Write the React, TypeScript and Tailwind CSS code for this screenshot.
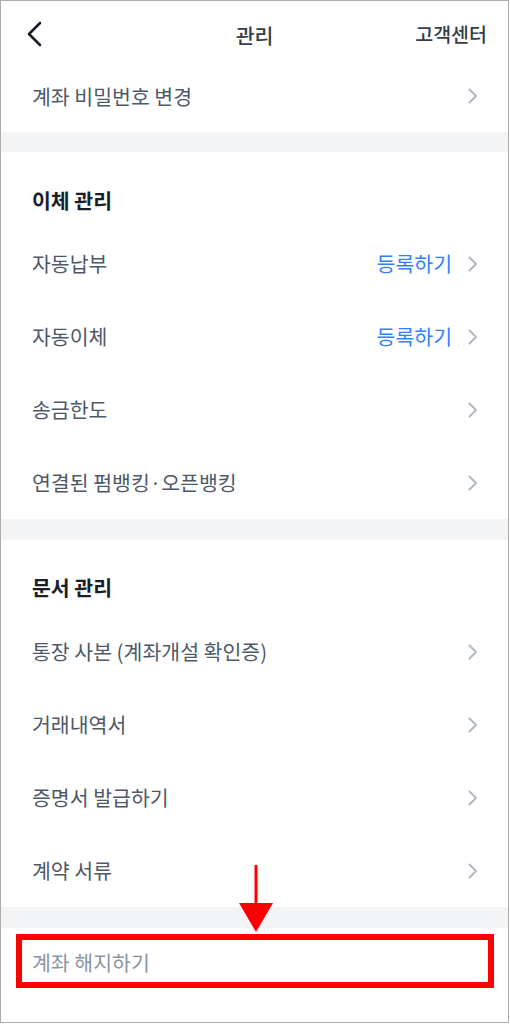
import React from "react";

const font = { fontFamily: '"Noto Sans CJK KR", "Noto Sans", sans-serif' };

function Chevron() {
  return (
    <svg width="10" height="16" viewBox="0 0 10 16" fill="none" className="shrink-0">
      <path d="M1.5 1.5L8 8L1.5 14.5" stroke="#b0b8c1" strokeWidth="2" strokeLinecap="round" strokeLinejoin="round" />
    </svg>
  );
}

interface RowProps {
  label: string;
  action?: string;
}

function Row({ label, action }: RowProps) {
  return (
    <div className="flex h-[73px] items-center justify-between pl-[31px] pr-[30px]">
      <span className="text-[20.5px] leading-none text-[#4e5968]">{label}</span>
      <div className="flex items-center gap-[16px]">
        {action && <span className="text-[20.5px] leading-none text-[#3182f6]">{action}</span>}
        <Chevron />
      </div>
    </div>
  );
}

function SectionTitle({ title, top }: { title: string; top: string }) {
  return (
    <div className={`flex h-[75px] items-center pl-[31px] ${top}`}>
      <span className="text-[20.5px] font-bold leading-none text-[#191f28]">{title}</span>
    </div>
  );
}

export default function App() {
  return (
    <div style={font} className="relative h-[1023px] w-[509px] overflow-hidden border border-[#acacac] bg-white">
      {/* Header */}
      <div className="relative flex h-[59px] items-center justify-between pl-[25px] pr-[21px] pt-[6px]">
        <svg width="18" height="26" viewBox="0 0 18 26" fill="none">
          <path d="M14 2L3 13L14 24" stroke="#191f28" strokeWidth="2.6" strokeLinecap="round" strokeLinejoin="round" />
        </svg>
        <span className="absolute left-1/2 top-[34px] -translate-x-1/2 -translate-y-1/2 text-[20.5px] font-medium leading-none text-[#333d4b]">
          관리
        </span>
        <span className="text-[19.5px] font-medium leading-none text-[#333d4b]">고객센터</span>
      </div>

      <div className="flex h-[72px] items-center justify-between pl-[31px] pr-[30px]">
        <span className="text-[20.5px] leading-none text-[#4e5968]">계좌 비밀번호 변경</span>
        <Chevron />
      </div>

      <div className="h-[20px] bg-[#f2f4f6]" />

      <SectionTitle title="이체 관리" top="pt-[22px]" />
      <Row label="자동납부" action="등록하기" />
      <Row label="자동이체" action="등록하기" />
      <Row label="송금한도" />
      <Row label="연결된 펌뱅킹·오픈뱅킹" />

      <div className="h-[21px] bg-[#f2f4f6]" />

      <SectionTitle title="문서 관리" top="pt-[20px]" />
      <Row label="통장 사본 (계좌개설 확인증)" />
      <Row label="거래내역서" />
      <Row label="증명서 발급하기" />
      <Row label="계약 서류" />

      <div className="h-[21px] bg-[#f2f4f6]" />

      <div className="relative flex h-[68px] items-center pl-[31px]">
        <span className="text-[20.5px] leading-none text-[#8b95a1]">계좌 해지하기</span>
        {/* annotation box */}
        <div className="absolute left-[15px] top-[6px] h-[54px] w-[478px] border-[6px] border-[#ff0000]" />
      </div>

      {/* annotation arrow */}
      <svg
        className="absolute left-[237px] top-[864px]"
        width="36"
        height="69"
        viewBox="0 0 36 69"
        fill="none"
      >
        <rect x="16.5" y="0" width="3" height="40" fill="#ff0000" />
        <path d="M1 38H35L18 67Z" fill="#ff0000" />
      </svg>
    </div>
  );
}
